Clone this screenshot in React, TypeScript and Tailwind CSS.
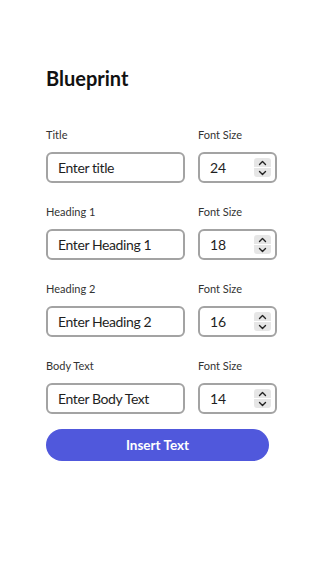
import React from "react";

const rows = [
  { label: "Title", placeholder: "Enter title", size: "24" },
  { label: "Heading 1", placeholder: "Enter Heading 1", size: "18" },
  { label: "Heading 2", placeholder: "Enter Heading 2", size: "16" },
  { label: "Body Text", placeholder: "Enter Body Text", size: "14" },
];

function Spinner() {
  return (
    <div className="flex flex-col gap-[1px] w-[17px]">
      <div className="h-[9px] bg-[#e6e6e6] rounded-t-[3px] flex items-center justify-center">
        <svg width="9" height="6" viewBox="0 0 9 6" fill="none">
          <path d="M1.5 4.5 L4.5 1.5 L7.5 4.5" stroke="#222" strokeWidth="1.4" strokeLinecap="round" strokeLinejoin="round" />
        </svg>
      </div>
      <div className="h-[9px] bg-[#e6e6e6] rounded-b-[3px] flex items-center justify-center">
        <svg width="9" height="6" viewBox="0 0 9 6" fill="none">
          <path d="M1.5 1.5 L4.5 4.5 L7.5 1.5" stroke="#222" strokeWidth="1.4" strokeLinecap="round" strokeLinejoin="round" />
        </svg>
      </div>
    </div>
  );
}

export default function App() {
  return (
    <div className="w-[316px] h-[573px] bg-white pl-[46px] pt-[64px]" style={{ fontFamily: 'Lato, "Noto Sans", sans-serif' }}>
      <h1 className="text-[20px] leading-[28px] font-bold text-[#111]">Blueprint</h1>
      <div className="mt-[35px] flex flex-col gap-[21px] w-[231px]">
        {rows.map((r) => (
          <div key={r.label} className="flex gap-[13px]">
            <div className="w-[139px] flex flex-col gap-[9px]">
              <div className="text-[11px] leading-[16px] text-[#333]">{r.label}</div>
              <div className="h-[31px] border-2 border-[#a3a3a3] rounded-[6px] flex items-center pl-[10px] text-[14px] tracking-[-0.4px] text-[#1f1f1f]">
                {r.placeholder}
              </div>
            </div>
            <div className="w-[79px] flex flex-col gap-[9px]">
              <div className="text-[11px] leading-[16px] text-[#333]">Font Size</div>
              <div className="h-[31px] border-2 border-[#a3a3a3] rounded-[6px] flex items-center justify-between pl-[10px] pr-[4px] text-[14px] text-[#1f1f1f]">
                <span>{r.size}</span>
                <Spinner />
              </div>
            </div>
          </div>
        ))}
      </div>
      <button className="mt-[15px] w-[223px] h-[32px] rounded-full bg-[#5058dc] text-white text-[13.5px] font-bold flex items-center justify-center">
        Insert Text
      </button>
    </div>
  );
}
